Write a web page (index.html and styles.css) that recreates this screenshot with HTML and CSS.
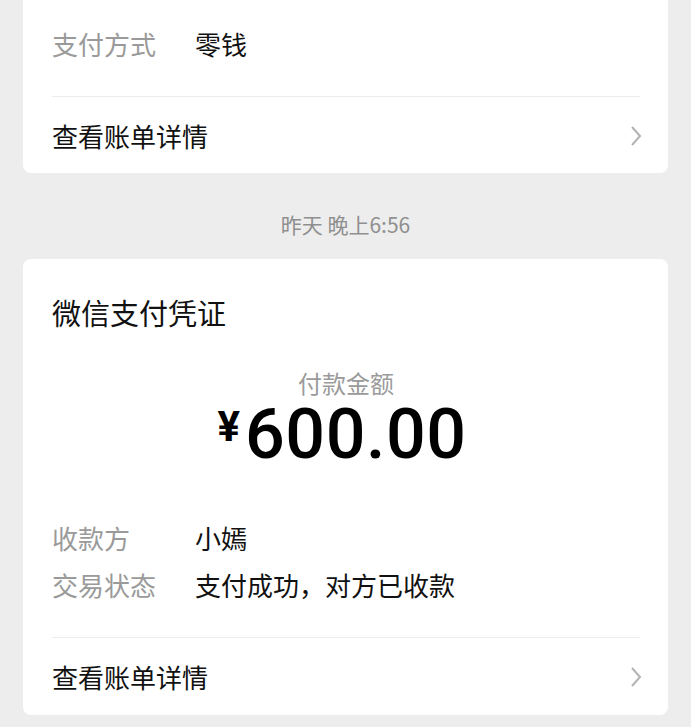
FILE: index.html
```html
<!DOCTYPE html>
<html lang="zh-CN">
<head>
<meta charset="utf-8">
<link rel="stylesheet" href="styles.css">
</head>
<body>
<div class="page">
  <div class="card card-top">
    <div class="info">
      <div class="row"><span class="label">支付方式</span><span class="value">零钱</span></div>
    </div>
    <div class="divider"></div>
    <div class="link">
      <span>查看账单详情</span>
      <svg class="chev" width="14" height="22" viewBox="0 0 14 22"><path d="M3 2 L11 11 L3 20" fill="none" stroke="#b3b3b3" stroke-width="2"/></svg>
    </div>
  </div>

  <div class="time">昨天 晚上6:56</div>

  <div class="card card-main">
    <div class="title">微信支付凭证</div>
    <div class="amount-label">付款金额</div>
    <div class="amount"><span class="yen">¥</span><span class="num">600.00</span></div>
    <div class="info info-main">
      <div class="row"><span class="label">收款方</span><span class="value">小嫣</span></div>
      <div class="row"><span class="label">交易状态</span><span class="value">支付成功，对方已收款</span></div>
    </div>
    <div class="divider"></div>
    <div class="link">
      <span>查看账单详情</span>
      <svg class="chev" width="14" height="22" viewBox="0 0 14 22"><path d="M3 2 L11 11 L3 20" fill="none" stroke="#b3b3b3" stroke-width="2"/></svg>
    </div>
  </div>
</div>
</body>
</html>
```

FILE: styles.css
```css
html, body {
  margin: 0;
  padding: 0;
  background: #ededed;
}
body {
  font-family: "Noto Sans CJK SC", "Noto Sans", sans-serif;
  color: #111;
}
.page {
  padding: 0 23px;
  display: flex;
  flex-direction: column;
}
.card {
  background: #fff;
  border-radius: 8px;
  padding: 0 28px 0 29px;
  display: flex;
  flex-direction: column;
}
.card-top {
  border-radius: 0 0 8px 8px;
  padding-top: 26px;
  padding-bottom: 19px;
}
.info {
  display: flex;
  flex-direction: column;
  gap: 11px;
  padding-bottom: 34px;
}
.row {
  display: flex;
  font-size: 26px;
  line-height: 36px;
}
.label {
  width: 143px;
  flex: none;
  color: #9a9a9a;
}
.value {
  color: #111;
}
.divider {
  height: 1px;
  background: #ececec;
}
.link {
  margin-top: 21px;
  display: flex;
  align-items: center;
  justify-content: space-between;
  font-size: 26px;
  line-height: 36px;
  color: #111;
}
.chev {
  margin-right: -3px;
}
.time {
  margin: 37px 0 21px;
  text-align: center;
  font-size: 21px;
  line-height: 28px;
  color: #8f8f8f;
}
.card-main {
  padding-top: 33px;
  padding-bottom: 20px;
}
.title {
  font-size: 29px;
  line-height: 40px;
  color: #111;
}
.amount-label {
  margin-top: 41px;
  text-align: center;
  font-size: 24px;
  line-height: 20px;
  color: #9a9a9a;
}
.amount {
  height: 82px;
  display: flex;
  justify-content: center;
  align-items: flex-start;
  color: #000;
  font-family: Roboto, "Noto Sans", sans-serif;
  margin-left: -8px;
}
.num {
  font-weight: 500;
  font-size: 70px;
  line-height: 82px;
  letter-spacing: 0.5px;
}
.yen {
  font-size: 42px;
  font-weight: 700;
  line-height: 42px;
  margin-top: 13px;
  margin-right: 5px;
}
.info-main {
  margin-top: 45px;
}
```
